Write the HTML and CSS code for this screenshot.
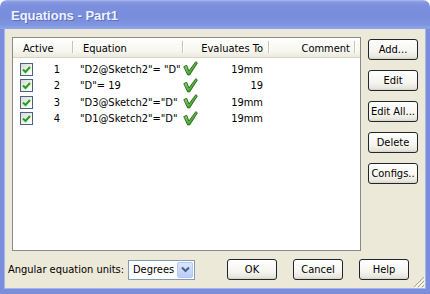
FILE: index.html
```html
<!DOCTYPE html>
<html>
<head>
<meta charset="utf-8">
<link rel="stylesheet" href="styles.css">
</head>
<body>
<div class="window">
  <div class="titlebar"><span class="title">Equations - Part1</span></div>
  <div class="client">
    <div class="main">
      <div class="listbox">
        <div class="lv-header">
          <div class="hcell c-active">Active</div>
          <div class="hcell c-eq">Equation</div>
          <div class="hcell c-eval right">Evaluates To</div>
          <div class="hcell c-comment right">Comment</div>
          <div class="hcell c-rest"></div>
        </div>
        <div class="lv-body">
          <div class="row">
            <div class="cell c-active"><span class="chk"><svg viewBox="0 0 9 9" width="9" height="9"><path d="M1 4.5 L3.5 7 L8 2" fill="none" stroke="#21a121" stroke-width="2"/></svg></span><span class="num">1</span></div>
            <div class="cell c-eq">"D2@Sketch2"= "D"</div>
            <div class="cell c-eval"><svg class="ok" viewBox="0 0 15 15" width="15" height="15"><defs><linearGradient id="g1" x1="0" y1="0" x2="1" y2="1"><stop offset="0" stop-color="#a8e68a"/><stop offset="0.6" stop-color="#4caf35"/><stop offset="1" stop-color="#2a7e1c"/></linearGradient></defs><path d="M0.8 5.6 L3.7 4.3 L5.9 10 L12.8 0.7 L14.4 1.9 L6.7 13.9 L4.6 13.9 Z" fill="url(#g1)" stroke="#2c5f1d" stroke-width="0.9" stroke-linejoin="round"/></svg><span class="val">19mm</span></div>
            <div class="cell c-comment"></div>
            <div class="cell c-rest"></div>
          </div>
          <div class="row">
            <div class="cell c-active"><span class="chk"><svg viewBox="0 0 9 9" width="9" height="9"><path d="M1 4.5 L3.5 7 L8 2" fill="none" stroke="#21a121" stroke-width="2"/></svg></span><span class="num">2</span></div>
            <div class="cell c-eq">"D"= 19</div>
            <div class="cell c-eval"><svg class="ok" viewBox="0 0 15 15" width="15" height="15"><path d="M0.8 5.6 L3.7 4.3 L5.9 10 L12.8 0.7 L14.4 1.9 L6.7 13.9 L4.6 13.9 Z" fill="url(#g1)" stroke="#2c5f1d" stroke-width="0.9" stroke-linejoin="round"/></svg><span class="val">19</span></div>
            <div class="cell c-comment"></div>
            <div class="cell c-rest"></div>
          </div>
          <div class="row">
            <div class="cell c-active"><span class="chk"><svg viewBox="0 0 9 9" width="9" height="9"><path d="M1 4.5 L3.5 7 L8 2" fill="none" stroke="#21a121" stroke-width="2"/></svg></span><span class="num">3</span></div>
            <div class="cell c-eq">"D3@Sketch2"="D"</div>
            <div class="cell c-eval"><svg class="ok" viewBox="0 0 15 15" width="15" height="15"><path d="M0.8 5.6 L3.7 4.3 L5.9 10 L12.8 0.7 L14.4 1.9 L6.7 13.9 L4.6 13.9 Z" fill="url(#g1)" stroke="#2c5f1d" stroke-width="0.9" stroke-linejoin="round"/></svg><span class="val">19mm</span></div>
            <div class="cell c-comment"></div>
            <div class="cell c-rest"></div>
          </div>
          <div class="row">
            <div class="cell c-active"><span class="chk"><svg viewBox="0 0 9 9" width="9" height="9"><path d="M1 4.5 L3.5 7 L8 2" fill="none" stroke="#21a121" stroke-width="2"/></svg></span><span class="num">4</span></div>
            <div class="cell c-eq">"D1@Sketch2"="D"</div>
            <div class="cell c-eval"><svg class="ok" viewBox="0 0 15 15" width="15" height="15"><path d="M0.8 5.6 L3.7 4.3 L5.9 10 L12.8 0.7 L14.4 1.9 L6.7 13.9 L4.6 13.9 Z" fill="url(#g1)" stroke="#2c5f1d" stroke-width="0.9" stroke-linejoin="round"/></svg><span class="val">19mm</span></div>
            <div class="cell c-comment"></div>
            <div class="cell c-rest"></div>
          </div>
        </div>
      </div>
      <div class="side-buttons">
        <button class="btn">Add...</button>
        <button class="btn">Edit</button>
        <button class="btn">Edit All...</button>
        <button class="btn">Delete</button>
        <button class="btn">Configs..</button>
      </div>
    </div>
    <div class="footer">
      <span class="label">Angular equation units:</span>
      <div class="select"><span class="sel-text">Degrees</span><span class="sel-btn"><svg viewBox="0 0 9 7" width="9" height="7"><path d="M1 1.5 L4.5 5 L8 1.5" fill="none" stroke="#4d6185" stroke-width="2"/></svg></span></div>
      <div class="footer-buttons">
        <button class="btn">OK</button>
        <button class="btn">Cancel</button>
        <button class="btn">Help</button>
      </div>
    </div>
    <svg class="grip" viewBox="0 0 13 13" width="13" height="13">
      <path d="M12 2 L2 12 M12 6 L6 12 M12 10 L10 12" stroke="#a6a597" stroke-width="1"/>
      <path d="M13 3 L3 13 M13 7 L7 13 M13 11 L11 13" stroke="#ffffff" stroke-width="1"/>
    </svg>
  </div>
</div>
</body>
</html>
```

FILE: styles.css
```css
html, body {
  margin: 0;
  padding: 0;
  background: #ffffff;
}

body {
  font-family: "DejaVu Sans Condensed", "Liberation Sans", sans-serif;
  font-size: 11px;
  color: #000;
}

.window {
  width: 430px;
  height: 294px;
  display: flex;
  flex-direction: column;
  box-sizing: border-box;
}

.titlebar {
  height: 29px;
  flex: none;
  border-radius: 7px 7px 0 0;
  background: linear-gradient(#a9b9f0 0, #8799e2 2px, #7b8fdd 6px, #798ddc 60%, #7f95e0 85%, #8fa4e9 100%);
  display: flex;
  align-items: center;
  padding-left: 11px;
  box-sizing: border-box;
}

.title {
  font-family: "Liberation Sans", sans-serif;
  font-weight: bold;
  font-size: 13px;
  color: #eef2ff;
  text-shadow: 1px 1px 0 #5a6cbf;
  padding-top: 1px;
}

.client {
  position: relative;
  flex: 1;
  background: #ece9d8;
  border-left: 4px solid #7a8edc;
  border-right: 4px solid #7a8edc;
  border-bottom: 5px solid #7a8edc;
  box-shadow: inset 1px 0 0 #a5b5ee, inset -1px 0 0 #a5b5ee, inset 0 -1px 0 #a5b5ee;
  display: flex;
  flex-direction: column;
  padding: 8px 8px 0 8px;
}

.main {
  display: flex;
  gap: 7px;
}

.listbox {
  width: 349px;
  height: 214px;
  box-sizing: border-box;
  border: 1px solid #8b8b86;
  background: #fff;
}

.lv-header {
  display: grid;
  grid-template-columns: 60px 110px 86px 86px 1fr;
  height: 20px;
  background: linear-gradient(#ffffff, #f7f6f0 70%, #ebeadb);
  border-bottom: 1px solid #d7d5c9;
  box-sizing: border-box;
}

.hcell {
  position: relative;
  display: flex;
  align-items: center;
  padding-left: 10px;
  white-space: nowrap;
  padding-top: 1px;
}

.hcell::after {
  content: "";
  position: absolute;
  right: 0;
  top: 3px;
  bottom: 4px;
  width: 1px;
  background: #c7c5b2;
  box-shadow: 1px 0 0 #fff;
}

.hcell.c-rest::after { display: none; }

.hcell.right {
  justify-content: flex-end;
  padding-left: 0;
  padding-right: 6px;
}

.hcell.c-comment { padding-right: 5px; }

.lv-body {
  padding-top: 3px;
}

.row {
  display: grid;
  grid-template-columns: 60px 110px 86px 86px 1fr;
  height: 16.5px;
  align-items: center;
}

.cell {
  display: flex;
  align-items: center;
  white-space: nowrap;
}

.cell.c-active {
  padding-left: 7px;
  padding-right: 13px;
  justify-content: space-between;
}

.chk {
  width: 13px;
  height: 13px;
  box-sizing: border-box;
  border: 1px solid #4d6185;
  background: linear-gradient(135deg, #dcdcd5, #f5f5f1 70%, #fff);
  display: flex;
  align-items: center;
  justify-content: center;
}

.chk svg { display: block; }

.cell.c-eq {
  padding-left: 7px;
}

.cell.c-eval {
  justify-content: space-between;
  padding-right: 6px;
}

.ok {
  display: block;
  margin-top: -1px;
}

.side-buttons {
  display: flex;
  flex-direction: column;
  gap: 10px;
  padding-top: 2px;
}

.btn {
  width: 50px;
  height: 21px;
  box-sizing: border-box;
  border: 1px solid #1e2630;
  border-radius: 3px;
  background: linear-gradient(#ffffff, #f6f5f0 60%, #e8e6dc 90%, #d6d2c4);
  font-family: "DejaVu Sans Condensed", "Liberation Sans", sans-serif;
  font-size: 11px;
  color: #000;
  padding: 0;
  white-space: nowrap;
}

.footer {
  display: flex;
  align-items: center;
  margin-top: 8px;
  margin-left: -4px;
  height: 21px;
}

.label {
  width: 120px;
  white-space: nowrap;
}

.select {
  width: 67px;
  height: 20px;
  box-sizing: border-box;
  border: 1px solid #7f9db9;
  background: #fff;
  display: flex;
  align-items: center;
  justify-content: space-between;
  padding: 1px 1px 1px 4px;
}

.sel-btn {
  width: 16px;
  height: 16px;
  box-sizing: border-box;
  background: linear-gradient(#dbe6fd, #b9cdf7);
  border: 1px solid #b6c8f2;
  border-radius: 2px;
  display: flex;
  align-items: center;
  justify-content: center;
}

.sel-btn svg { display: block; }

.footer-buttons {
  display: flex;
  gap: 16px;
  margin-left: 32px;
}

.grip {
  position: absolute;
  right: 1px;
  bottom: 1px;
}
```
